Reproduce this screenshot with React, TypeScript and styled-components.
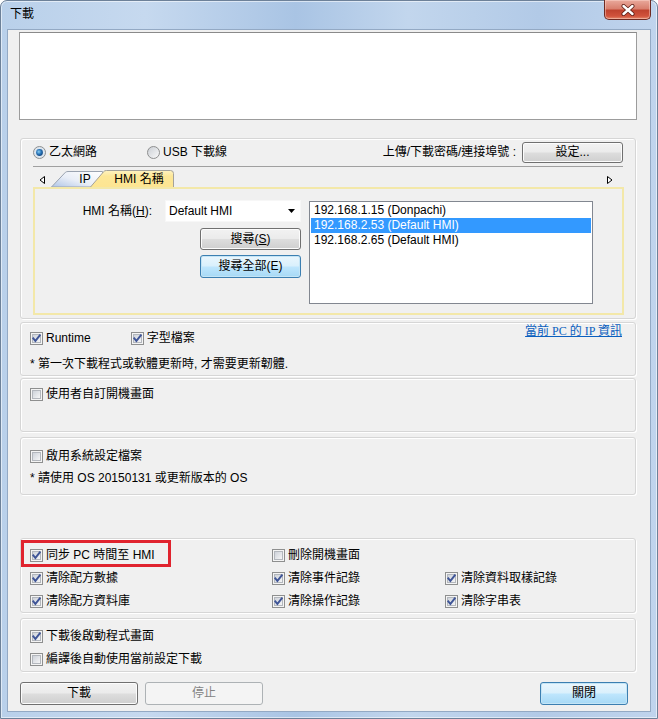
import React, { useId } from "react";
import styled, { createGlobalStyle, css } from "styled-components";

const GlobalStyle = createGlobalStyle`
  html, body { margin: 0; padding: 0; background: #ffffff; }
  body {
    font-family: "Liberation Sans", "Noto Sans CJK TC", sans-serif;
    font-size: 12px;
    line-height: 15px;
    color: #000;
  }
  *, *::before, *::after { box-sizing: border-box; }
`;

const Window = styled.div`
  width: 658px;
  height: 719px;
  display: flex;
  flex-direction: column;
  padding: 0 6px 6px 6px;
  background: linear-gradient(90deg, #b9d0ea 0%, #c6d9ef 22%, #a9c4e4 45%, #c2d6ed 62%, #b2cae7 82%, #c0d4ed 100%);
  border: 1px solid #6d8199;
  border-radius: 7px 7px 0 0;
  box-shadow: inset 0 0 0 1px rgba(255, 255, 255, 0.55);
`;

const TitleBar = styled.div`
  height: 28px;
  display: flex;
  align-items: flex-start;
  flex-shrink: 0;
`;

const Title = styled.div`
  padding: 6px 0 0 3px;
  font-size: 12px;
  color: #000;
`;

const CloseButton = styled.div`
  margin-left: auto;
  margin-top: -1px;
  width: 47px;
  height: 20px;
  border: 1px solid #6e2a22;
  border-top: none;
  border-radius: 0 0 5px 5px;
  background: linear-gradient(180deg, #e9a99c 0%, #d9806f 45%, #c0432f 55%, #d1533c 85%, #e58a6c 100%);
  box-shadow: inset 0 0 0 1px rgba(255, 220, 210, 0.45);
  display: flex;
  align-items: center;
  justify-content: center;
`;

const Client = styled.div`
  flex: 1;
  background: #f0f0f0;
  border: 1px solid #93a9c4;
  display: flex;
  flex-direction: column;
`;

const LogBox = styled.div`
  margin: 2px 13px 0 11px;
  height: 88px;
  background: #ffffff;
  border: 1px solid #9c9c9c;
  border-top-color: #8a8a8a;
`;

const Section = styled.div<{ $top: number; $h: number; $pad?: string }>`
  margin: ${(p) => p.$top}px 14px 0 12px;
  height: ${(p) => p.$h}px;
  flex-shrink: 0;
  border: 1px solid #d6d6d6;
  border-radius: 3px;
  box-shadow: inset 1px 1px 0 #ffffff, 1px 1px 0 #ffffff;
  padding: ${(p) => p.$pad ?? "0"};
  display: flex;
  flex-direction: column;
`;

const RadioRow = styled.div`
  margin: 0 12px 0 12px;
  height: 28px;
  border-bottom: 1px solid #a0a0a0;
  display: flex;
  align-items: center;
`;

const RadioItem = styled.label<{ $ml?: number }>`
  display: flex;
  align-items: center;
  gap: 3px;
  height: 15px;
  margin-left: ${(p) => p.$ml ?? 0}px;
`;

const PortLabel = styled.span`
  margin-left: auto;
  margin-right: 6px;
`;

const Button = styled.div<{ $w: number; $h?: number; $variant?: "normal" | "default" | "disabled" }>`
  width: ${(p) => p.$w}px;
  height: ${(p) => p.$h ?? 22}px;
  flex-shrink: 0;
  border-radius: 3px;
  display: flex;
  align-items: center;
  justify-content: center;
  font-size: 12px;
  ${(p) =>
    p.$variant === "default"
      ? css`
          border: 1px solid #3c7fb1;
          background: linear-gradient(180deg, #eaf6fd 0%, #d9f0fc 48%, #bee6fd 52%, #a7d9f5 100%);
          box-shadow: inset 0 0 0 1px #c4e5f6;
          color: #000;
        `
      : p.$variant === "disabled"
      ? css`
          border: 1px solid #adb2b5;
          background: #f4f4f4;
          color: #838383;
        `
      : css`
          border: 1px solid #707070;
          background: linear-gradient(180deg, #f2f2f2 0%, #ebebeb 48%, #dddddd 52%, #cfcfcf 100%);
          box-shadow: inset 0 0 0 1px #fcfcfc;
          color: #000;
        `}
`;

const TabBar = styled.div`
  margin: 0 12px 0 12px;
  height: 20px;
  display: flex;
  align-items: flex-end;
  padding: 0 10px 0 6px;
`;

const Arrow = styled.svg`
  align-self: center;
  margin-top: 5px;
  flex-shrink: 0;
`;

const Tab = styled.div<{ $w: number; $overlap?: number; $active?: boolean }>`
  position: relative;
  width: ${(p) => p.$w}px;
  height: 17px;
  margin-left: ${(p) => -(p.$overlap ?? 0)}px;
  display: flex;
  align-items: center;
  justify-content: center;
  padding-left: ${(p) => (p.$active ? 14 : 16)}px;
  padding-top: 1px;
  z-index: ${(p) => (p.$active ? 2 : 1)};
  & > svg {
    position: absolute;
    left: 0;
    top: 0;
  }
  & > span {
    position: relative;
  }
`;

const TabSpacer = styled.div<{ $w?: number }>`
  flex: ${(p) => (p.$w ? `0 0 ${p.$w}px` : "1")};
`;

const TabPanel = styled.div`
  margin: 0 11px 0 12px;
  height: 128px;
  border: 2px solid #f3e8a9;
  display: flex;
  padding: 11px 0 0 0;
`;

const FieldLabel = styled.div`
  width: 130px;
  text-align: right;
  padding-right: 13px;
  padding-top: 4px;
`;

const Controls = styled.div`
  width: 136px;
  display: flex;
  flex-direction: column;
  align-items: flex-end;
  gap: 5px;
`;

const Combo = styled.div`
  width: 136px;
  height: 22px;
  background: #ffffff;
  border: 1px solid #f7f7f7;
  display: flex;
  align-items: center;
  padding: 0 5px 0 3px;
  margin-bottom: 1px;
  & > span {
    flex: 1;
  }
`;

const ListBox = styled.div`
  margin-left: 8px;
  margin-top: 1px;
  width: 284px;
  height: 103px;
  background: #ffffff;
  border: 1px solid #828790;
  padding: 1px 1px 0 1px;
`;

const ListItem = styled.div<{ $selected?: boolean }>`
  height: 15px;
  line-height: 15px;
  padding-left: 3px;
  white-space: nowrap;
  ${(p) =>
    p.$selected &&
    css`
      background: #3399ff;
      color: #ffffff;
    `}
`;

const CheckItem = styled.label<{ $highlight?: boolean }>`
  position: relative;
  display: flex;
  align-items: center;
  gap: 3px;
  height: 15px;
  white-space: nowrap;
  ${(p) =>
    p.$highlight &&
    css`
      &::after {
        content: "";
        position: absolute;
        left: -9px;
        top: -8px;
        width: 150px;
        height: 27px;
        border: 3px solid #e0232e;
      }
    `}
`;

const CheckIcon = styled.svg`
  flex-shrink: 0;
  display: block;
`;

const Row = styled.div<{ $gap?: number; $mt?: number }>`
  display: flex;
  align-items: center;
  gap: ${(p) => p.$gap ?? 0}px;
  margin-top: ${(p) => p.$mt ?? 0}px;
  height: 15px;
`;

const HeaderRow = styled.div`
  display: flex;
  align-items: flex-start;
`;

const LeftChecks = styled.div`
  display: flex;
  gap: 40px;
  padding-top: 8px;
`;

const Link = styled.a`
  margin-left: auto;
  margin-top: 1px;
  font-family: "Liberation Serif", "Noto Sans CJK TC", serif;
  color: #0a5fbf;
  text-decoration: underline;
  font-size: 12px;
  white-space: nowrap;
`;

const Note = styled.div<{ $mt: number }>`
  margin-top: ${(p) => p.$mt}px;
  height: 15px;
  white-space: nowrap;
`;

const Grid = styled.div`
  display: grid;
  grid-template-columns: 242px 173px 1fr;
  grid-auto-rows: 15px;
  row-gap: 8px;
`;

const Spacer = styled.div`
  flex: 1;
`;

const ButtonRow = styled.div`
  margin: 10px 22px 0 12px;
  display: flex;
  gap: 7px;
`;

const Checkbox: React.FC<{ checked?: boolean }> = ({ checked }) => {
  const id = useId().replace(/:/g, "");
  return (
    <CheckIcon width="13" height="13" viewBox="0 0 13 13">
      <defs>
        <linearGradient id={`${id}g`} x1="0" y1="0" x2="1" y2="1">
          <stop offset="0" stopColor="#cbd0d8" />
          <stop offset="1" stopColor="#f8f8f8" />
        </linearGradient>
      </defs>
      <rect x="0.5" y="0.5" width="12" height="12" fill="#f4f4f4" stroke="#8e8f8f" />
      <rect x="2.5" y="2.5" width="8" height="8" fill={`url(#${id}g)`} stroke="#b3b7bd" />
      {checked && (
        <path d="M3.3 6.3 L5.4 8.9 L9.8 3.3" fill="none" stroke="#3f5597" strokeWidth="1.9" strokeLinecap="square" />
      )}
    </CheckIcon>
  );
};

const Radio: React.FC<{ checked?: boolean }> = ({ checked }) => {
  const id = useId().replace(/:/g, "");
  return (
    <CheckIcon width="13" height="13" viewBox="0 0 13 13">
      <defs>
        <linearGradient id={`${id}r`} x1="0" y1="0" x2="1" y2="1">
          <stop offset="0" stopColor="#c9cdd3" />
          <stop offset="1" stopColor="#fbfbfb" />
        </linearGradient>
        <radialGradient id={`${id}d`} cx="0.4" cy="0.4" r="0.7">
          <stop offset="0" stopColor="#8bd0f5" />
          <stop offset="0.5" stopColor="#2a75b8" />
          <stop offset="1" stopColor="#0b3b72" />
        </radialGradient>
      </defs>
      <circle cx="6.5" cy="6.5" r="6" fill={checked ? "#dde6ef" : `url(#${id}r)`} stroke="#8e8f8f" />
      {checked && <circle cx="6.5" cy="6.5" r="3.4" fill={`url(#${id}d)`} />}
    </CheckIcon>
  );
};

const Check: React.FC<{ checked?: boolean; highlight?: boolean; children: React.ReactNode }> = ({
  checked,
  highlight,
  children,
}) => (
  <CheckItem $highlight={highlight}>
    <Checkbox checked={checked} />
    <span>{children}</span>
  </CheckItem>
);

export default function App() {
  return (
    <>
      <GlobalStyle />
      <Window>
        <TitleBar>
          <Title>下載</Title>
          <CloseButton>
            <svg width="14" height="12" viewBox="0 0 14 12">
              <path d="M2.5 2 L11.5 10 M11.5 2 L2.5 10" stroke="#5a1c14" strokeWidth="4" strokeLinecap="round" />
              <path d="M2.5 2 L11.5 10 M11.5 2 L2.5 10" stroke="#ffffff" strokeWidth="2.4" strokeLinecap="round" />
            </svg>
          </CloseButton>
        </TitleBar>
        <Client>
          <LogBox />
          <Section $top={18} $h={181} $pad="0 0 3px 0">
            <RadioRow>
              <RadioItem>
                <Radio checked />
                <span>乙太網路</span>
              </RadioItem>
              <RadioItem $ml={50}>
                <Radio />
                <span>USB 下載線</span>
              </RadioItem>
              <PortLabel>上傳/下載密碼/連接埠號 :</PortLabel>
              <Button $w={101} $h={21}>設定...</Button>
            </RadioRow>
            <TabBar>
              <Arrow width="6" height="8" viewBox="0 0 6 8">
                <path d="M5.5 0.5 L1 4 L5.5 7.5 Z" fill="#ffffff" stroke="#000000" />
              </Arrow>
              <TabSpacer $w={6} />
              <Tab $w={52}>
                <svg width="52" height="17" viewBox="0 0 52 17">
                  <defs>
                    <linearGradient id="ipTab" x1="1" y1="0" x2="0" y2="1">
                      <stop offset="0" stopColor="#ffffff" />
                      <stop offset="0.55" stopColor="#e9eef7" />
                      <stop offset="1" stopColor="#aec4e6" />
                    </linearGradient>
                  </defs>
                  <path d="M0.5 17 L14.5 2.2 Q15.5 1.5 17 1.5 L51.5 1.5 L51.5 17 Z" fill="url(#ipTab)" stroke="#9aa3b0" />
                </svg>
                <span>IP</span>
              </Tab>
              <Tab $w={84} $overlap={13} $active>
                <svg width="84" height="17" viewBox="0 0 84 17">
                  <defs>
                    <linearGradient id="hmiTab" x1="0" y1="0" x2="0" y2="1">
                      <stop offset="0" stopColor="#fff3c2" />
                      <stop offset="0.35" stopColor="#fde797" />
                      <stop offset="1" stopColor="#fde592" />
                    </linearGradient>
                  </defs>
                  <path d="M0.5 17 L13.5 1.8 Q14.5 0.5 16.5 0.5 L80.5 0.5 Q83.5 0.5 83.5 3.5 L83.5 17" fill="url(#hmiTab)" stroke="#a4a29a" />
                </svg>
                <span>HMI 名稱</span>
              </Tab>
              <TabSpacer />
              <Arrow width="6" height="8" viewBox="0 0 6 8">
                <path d="M0.5 0.5 L5 4 L0.5 7.5 Z" fill="#ffffff" stroke="#000000" />
              </Arrow>
            </TabBar>
            <TabPanel>
              <FieldLabel>
                HMI 名稱(<u>H</u>):
              </FieldLabel>
              <Controls>
                <Combo>
                  <span>Default HMI</span>
                  <svg width="7" height="4" viewBox="0 0 7 4">
                    <path d="M0 0 L7 0 L3.5 4 Z" fill="#000" />
                  </svg>
                </Combo>
                <Button $w={101}>
                  搜尋(<u>S</u>)
                </Button>
                <Button $w={101} $h={23} $variant="default">
                  搜尋全部(E)
                </Button>
              </Controls>
              <ListBox>
                <ListItem>192.168.1.15 (Donpachi)</ListItem>
                <ListItem $selected>192.168.2.53 (Default HMI)</ListItem>
                <ListItem>192.168.2.65 (Default HMI)</ListItem>
              </ListBox>
            </TabPanel>
          </Section>

          <Section $top={3} $h={54} $pad="0 13px 0 9px">
            <HeaderRow>
              <LeftChecks>
                <Check checked>Runtime</Check>
                <Check checked>字型檔案</Check>
              </LeftChecks>
              <Link>當前 PC 的 IP 資訊</Link>
            </HeaderRow>
            <Note $mt={11}>* 第一次下載程式或軟體更新時, 才需要更新韌體.</Note>
          </Section>

          <Section $top={2} $h={54} $pad="8px 13px 0 9px">
            <Row>
              <Check>使用者自訂開機畫面</Check>
            </Row>
          </Section>

          <Section $top={5} $h={58} $pad="11px 13px 0 9px">
            <Row>
              <Check>啟用系統設定檔案</Check>
            </Row>
            <Note $mt={7}>* 請使用 OS 20150131 或更新版本的 OS</Note>
          </Section>

          <Section $top={43} $h={75} $pad="9px 13px 0 9px">
            <Grid>
              <Check checked highlight>
                同步 PC 時間至 HMI
              </Check>
              <Check>刪除開機畫面</Check>
              <span />
              <Check checked>清除配方數據</Check>
              <Check checked>清除事件記錄</Check>
              <Check checked>清除資料取樣記錄</Check>
              <Check checked>清除配方資料庫</Check>
              <Check checked>清除操作記錄</Check>
              <Check checked>清除字串表</Check>
            </Grid>
          </Section>

          <Section $top={5} $h={54} $pad="10px 13px 0 9px">
            <Row>
              <Check checked>下載後啟動程式畫面</Check>
            </Row>
            <Row $mt={8}>
              <Check>編譯後自動使用當前設定下載</Check>
            </Row>
          </Section>

          <ButtonRow>
            <Button $w={118} $h={23}>下載</Button>
            <Button $w={118} $h={23} $variant="disabled">停止</Button>
            <Spacer />
            <Button $w={88} $h={23} $variant="default">關閉</Button>
          </ButtonRow>
        </Client>
      </Window>
    </>
  );
}
